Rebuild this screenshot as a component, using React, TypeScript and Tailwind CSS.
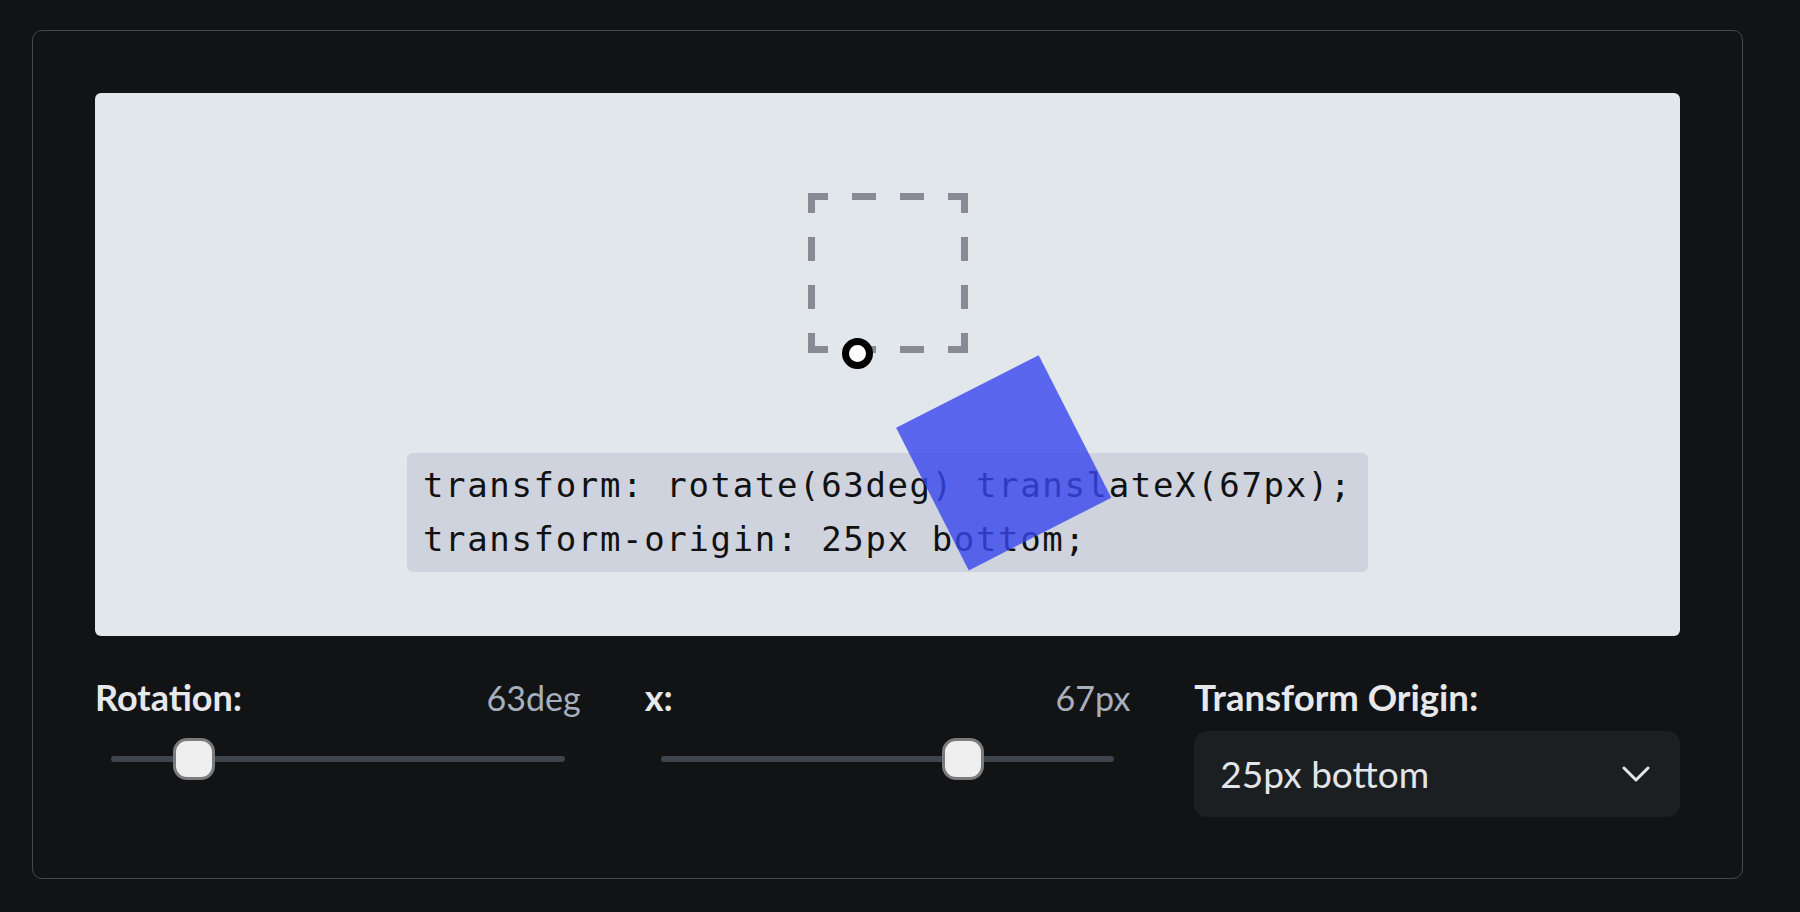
import { useState } from 'react'

const SCALE = 2

function Slider({ value, min, max }: { value: number; min: number; max: number }) {
  const pct = (value - min) / (max - min)
  return (
    <div className="relative mt-[18px] h-[42px]">
      <div className="absolute left-4 right-4 top-[18px] h-[6px] rounded-full bg-[#3e454c]" />
      <div
        className="absolute top-0 h-[42px] w-[42px] rounded-[14px] border-[3px] border-[#7b7b7b] bg-[#efefef]"
        style={{ left: `calc(${pct} * (100% - 42px))` }}
      />
    </div>
  )
}

function DashedBox() {
  const dash = '20 24 24 24 24 24 20'
  return (
    <svg width="160" height="160" className="absolute inset-0">
      <g stroke="#888a94" strokeWidth="7" strokeDasharray={dash}>
        <line x1="0" y1="3.5" x2="160" y2="3.5" />
        <line x1="0" y1="156.5" x2="160" y2="156.5" />
        <line x1="3.5" y1="0" x2="3.5" y2="160" />
        <line x1="156.5" y1="0" x2="156.5" y2="160" />
      </g>
    </svg>
  )
}

export default function App() {
  const [rotation] = useState(63)
  const [x] = useState(67)
  const origin = { x: 25, label: '25px bottom' }

  return (
    <div className="min-h-screen bg-[#121315] pl-[32px] pt-[30px] font-['Lato',sans-serif]">
      <div className="w-[1711px] rounded-[10px] border border-[#44494f] px-[62px] pt-[62px] pb-[61px]">
        {/* preview */}
        <div className="flex flex-col items-center rounded-[6px] bg-[#e2e7eb] pt-[100px] pb-[64px]">
          <div className="relative h-[160px] w-[160px]">
            <DashedBox />
            <div
              className="absolute inset-0 z-10 bg-[#3746ee] opacity-80"
              style={{
                transform: `rotate(${rotation}deg) translateX(${x * SCALE}px)`,
                transformOrigin: `${origin.x * SCALE}px 100%`,
              }}
            />
            <div className="absolute left-[34.5px] top-[144.5px] z-20 h-[31px] w-[31px] rounded-full border-[7.5px] border-black bg-white" />
          </div>
          <pre className="mt-[100px] rounded-[6px] bg-[#cfd3dd] px-4 pt-[6px] pb-[6px] font-['DejaVu_Sans_Mono',monospace] text-[34px] leading-[53.5px] tracking-[1.65px] text-[#111]">
            {`transform: rotate(${rotation}deg) translateX(${x}px);\ntransform-origin: ${origin.label};`}
          </pre>
        </div>

        {/* controls */}
        <div className="mt-[39px] grid grid-cols-3 gap-16">
          <div>
            <div className="flex items-baseline justify-between">
              <span className="text-[36px] leading-[44px] font-bold text-[#e6e8eb]">Rotation:</span>
              <span className="text-[34px] leading-[44px] text-[#a6b0bd]">{rotation}deg</span>
            </div>
            <Slider value={rotation} min={0} max={360} />
          </div>
          <div>
            <div className="flex items-baseline justify-between">
              <span className="text-[36px] leading-[44px] font-bold text-[#e6e8eb]">x:</span>
              <span className="text-[34px] leading-[44px] text-[#a6b0bd]">{x}px</span>
            </div>
            <Slider value={x} min={0} max={100} />
          </div>
          <div>
            <div className="text-[36.5px] leading-[44px] font-bold text-[#e6e8eb]">Transform Origin:</div>
            <div className="mt-[12px] flex h-[86px] items-center justify-between rounded-[13px] bg-[#1c1f22] pl-[26px] pr-[30px]">
              <span className="text-[37px] text-[#e2e5e9]">{origin.label}</span>
              <svg width="28" height="17" viewBox="0 0 28 17" fill="none">
                <polyline points="2,2 14,14 26,2" stroke="#e2e5e9" strokeWidth="3" strokeLinecap="round" strokeLinejoin="round" />
              </svg>
            </div>
          </div>
        </div>
      </div>
    </div>
  )
}
